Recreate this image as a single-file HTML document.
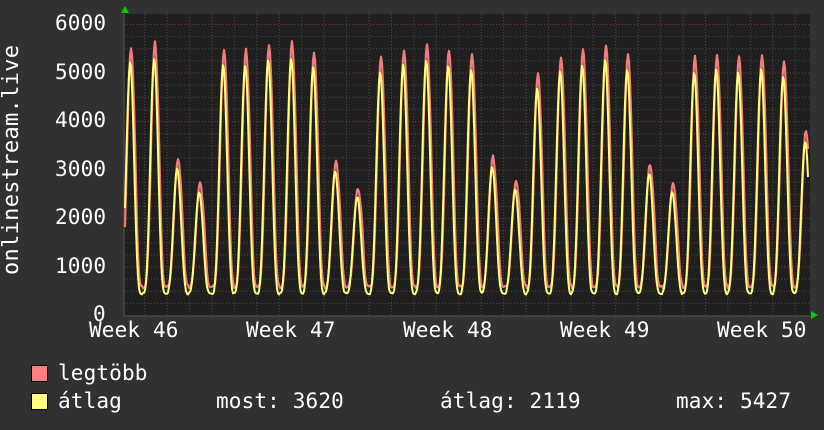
<!DOCTYPE html>
<html><head><meta charset="utf-8"><style>
html,body{margin:0;padding:0;background:#313131;}
body{width:824px;height:430px;overflow:hidden;position:relative;font-family:"DejaVu Sans Mono","Liberation Mono",monospace;color:#fff;}
.t{position:absolute;font-size:21px;line-height:21px;white-space:pre;letter-spacing:0.15px;}
.sq{position:absolute;width:15px;height:15px;border:1px solid #000;}
</style></head><body>
<svg id="g" width="824" height="430" style="position:absolute;left:0;top:0">
<rect x="124" y="14" width="686" height="302" fill="#1f1f1f"/>
<g id="grid"></g>
<polyline id="mx" fill="none" stroke="#f27c7c" stroke-width="2.2" stroke-linejoin="round"/>
<polyline id="av" fill="none" stroke="#ffff74" stroke-width="2" stroke-linejoin="round"/>
<polygon points="121,13 129,13 125,6" fill="#00cc00"/>
<polygon points="811,311 811,319 818,315" fill="#00cc00"/>
</svg>
<div class="t" style="left:55px;top:13px">6000</div>
<div class="t" style="left:55px;top:62px">5000</div>
<div class="t" style="left:55px;top:110px">4000</div>
<div class="t" style="left:55px;top:159px">3000</div>
<div class="t" style="left:55px;top:207px">2000</div>
<div class="t" style="left:55px;top:256px">1000</div>
<div class="t" style="left:93px;top:304px">0</div>
<div class="t" style="left:1px;top:275px;transform:rotate(-90deg);transform-origin:0 0;width:260px;font-size:22px;line-height:22px;letter-spacing:0.3px">onlinestream.live</div>
<div class="t" style="left:89px;top:320px">Week 46</div>
<div class="t" style="left:246px;top:320px">Week 47</div>
<div class="t" style="left:403px;top:320px">Week 48</div>
<div class="t" style="left:560px;top:320px">Week 49</div>
<div class="t" style="left:717px;top:320px">Week 50</div>
<div class="sq" style="left:31px;top:365px;background:#ff7f7f"></div>
<div class="sq" style="left:31px;top:393px;background:#ffff7f"></div>
<div class="t" style="left:58px;top:363px">legtöbb</div>
<div class="t" style="left:58px;top:391px">átlag</div>
<div class="t" style="left:216px;top:391px">most: 3620</div>
<div class="t" style="left:440px;top:391px">átlag: 2119</div>
<div class="t" style="left:676px;top:391px">max: 5427</div>
<script>
(function(){
var g=document.getElementById("grid"),s="";
function Y(v){return 315.5-v*0.0485;}
for(var v=250;v<=6250;v+=250){var y=Y(v);if(y<14)break;var maj=v%1000==0;
s+='<line x1="124" x2="810" y1="'+y+'" y2="'+y+'" stroke="'+(maj?'#7a3a3a':'#4a4a4a')+'" stroke-dasharray="1,2"/>';}
for(var k=-4;k<30;k++){var x=212+k*22.43;if(x<125||x>809)continue;var maj=(k%7==0);
s+='<line y1="14" y2="316" x1="'+x+'" x2="'+x+'" stroke="'+(maj?'#7a3a3a':'#4a4a4a')+'" stroke-dasharray="1,2"/>';}
s+='<line x1="124" x2="810" y1="316" y2="316" stroke="#555"/><line x1="124" x2="124" y1="14" y2="316" stroke="#555"/>';
g.innerHTML=s;
var pk=[131,155,178,200,224,246,269,292,314,336,358,381,404,427,449,472,493,516,538,561,583,606,628,650,673,695,717,739,762,784,806];
var hv=[5500,5600,3200,2700,5450,5450,5550,5600,5400,3150,2600,5300,5450,5550,5450,5350,3250,2750,4950,5300,5450,5550,5350,3100,2700,5300,5350,5300,5350,5200,3800];
function val(x,a){var best=0;for(var i=0;i<pk.length;i++){var d=(x-pk[i])/22.43;if(d<-0.6||d>0.6)continue;
var c=(1+Math.cos(2*Math.PI*Math.max(-0.5,Math.min(0.5,d))))/2;var f=Math.pow(c,1.7);
var h=hv[i]*(a?0.95:1);var lo=a?470:560;var v=lo+(h-lo)*f;
if(!a&&d>0.08&&d<0.3)v+=180*Math.sin((d-0.08)*14);
best=Math.max(best,v);}
if(best==0)best=a?470:560;return best;}
var p1=[],p2=[];
for(var x=125;x<=808;x+=1){var j=((x*7919)%13)/13;p1.push(x+","+Y(val(x,0)+j*60).toFixed(1));p2.push(x+","+Y(val(x+0.8,1)-j*40).toFixed(1));}
document.getElementById("mx").setAttribute("points",p1.join(" "));
document.getElementById("av").setAttribute("points",p2.join(" "));
})();
</script>
</body></html>
